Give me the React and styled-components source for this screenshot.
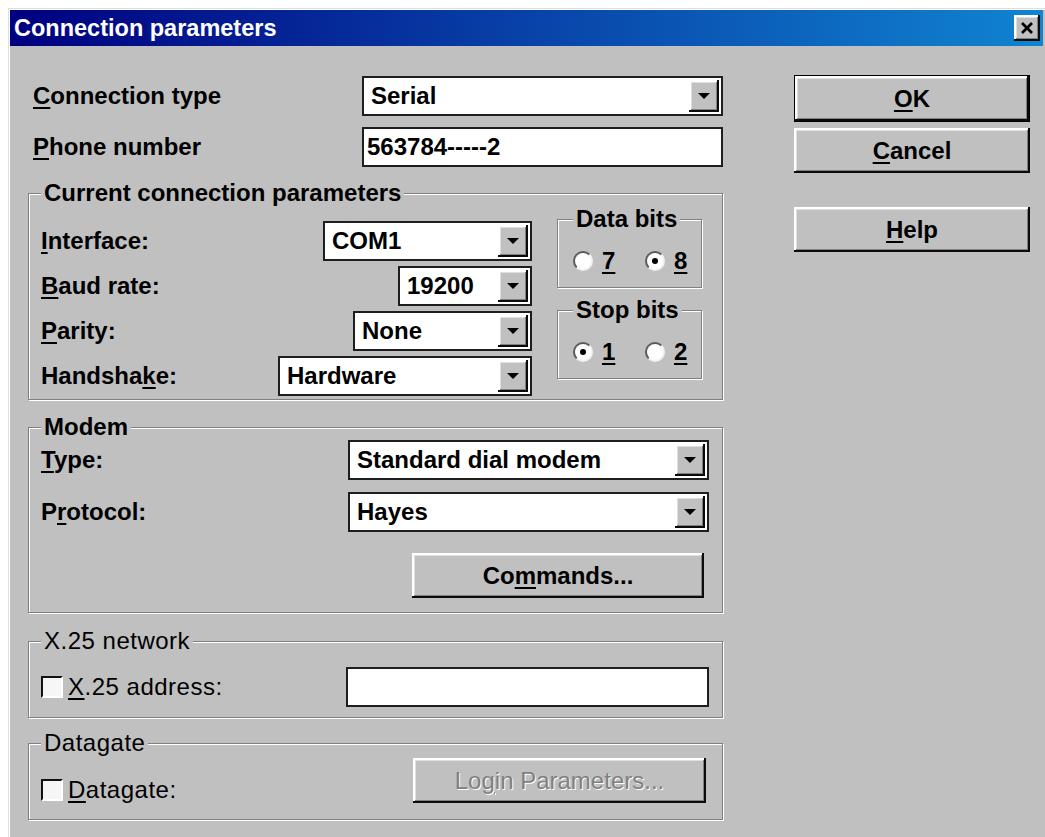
import React from "react";
import styled, { createGlobalStyle } from "styled-components";

const GlobalStyle = createGlobalStyle`
  body {
    margin: 0;
    background: #fff;
    font-family: "Liberation Sans", Arial, sans-serif;
    color: #000;
  }
`;

const raised = `
  box-shadow: inset -2px -2px 0 #0a0a0a, inset 2px 2px 0 #fff,
    inset -3px -3px 0 #808080, inset 3px 3px 0 #dfdfdf;
`;

const Dialog = styled.div`
  margin: 8px 0 0 8px;
  width: 1037px;
  height: 829px;
  box-sizing: border-box;
  padding: 2px 2px 0;
  background: #c0c0c0;
  box-shadow: inset 1px 1px 0 #dfdfdf, inset 2px 2px 0 #fff;
  overflow: hidden;
`;

const TitleBar = styled.div`
  height: 36px;
  display: flex;
  align-items: center;
  justify-content: space-between;
  padding: 0 3px 0 4px;
  background: linear-gradient(to right, #000080, #1084d0);
`;

const Title = styled.span`
  color: #fff;
  font-weight: 700;
  font-size: 23.5px;
`;

const CloseButton = styled.div`
  width: 26px;
  height: 26px;
  display: flex;
  align-items: center;
  justify-content: center;
  background: #c0c0c0;
  ${raised}
`;

const Body = styled.div`
  display: flex;
  padding: 30px 0 0 18px;
`;

const LeftCol = styled.div`
  width: 695px;
  display: flex;
  flex-direction: column;
`;

const RightCol = styled.div`
  width: 236px;
  margin: -1px 0 0 71px;
  display: flex;
  flex-direction: column;
`;

const TopRow = styled.div`
  height: 40px;
  display: flex;
  align-items: center;
  justify-content: space-between;
  padding-left: 5px;
  margin-top: ${(p) => p.$mt || 0}px;
`;

const Label = styled.span`
  font-size: 24px;
  line-height: 26px;
  font-weight: ${(p) => (p.$light ? 400 : 700)};
  letter-spacing: ${(p) => (p.$light ? "0.5px" : "0")};
  white-space: nowrap;
`;

const Key = styled.u`
  text-decoration-thickness: 2px;
  text-underline-offset: 3px;
`;

const ComboBox = styled.div`
  width: ${(p) => p.$w}px;
  height: 40px;
  box-sizing: border-box;
  display: flex;
  align-items: stretch;
  padding: 2px;
  background: #fff;
  border: 2px solid #1e1e1e;
`;

const ComboText = styled.span`
  flex: 1;
  display: flex;
  align-items: center;
  padding-left: 5px;
  font-size: 24px;
  font-weight: 700;
`;

const DropButton = styled.span`
  width: 30px;
  display: flex;
  align-items: center;
  justify-content: center;
  background: #c0c0c0;
  ${raised}

  &::after {
    content: "";
    border-left: 6px solid transparent;
    border-right: 6px solid transparent;
    border-top: 6px solid #000;
  }
`;

const TextBox = styled.div`
  width: ${(p) => p.$w}px;
  height: 40px;
  box-sizing: border-box;
  display: flex;
  align-items: center;
  padding-left: 3px;
  background: #fff;
  border: 2px solid #1e1e1e;
  font-size: 24px;
  font-weight: 700;
`;

const Group = styled.fieldset`
  margin: ${(p) => p.$mt}px 0 0;
  padding: ${(p) => p.$pt}px ${(p) => p.$pr}px ${(p) => p.$pb}px 12px;
  min-width: 0;
  border: 1px solid #808080;
  box-shadow: inset 1px 1px 0 #fff, 1px 1px 0 #fff;
`;

const SmallGroup = styled(Group)`
  margin: 0;
  padding: 15px 0 14px 15px;
`;

const Legend = styled.legend`
  padding: 0 3px;
  background: #c0c0c0;
  font-size: 24px;
  line-height: 26px;
  font-weight: ${(p) => (p.$light ? 400 : 700)};
  letter-spacing: ${(p) => (p.$light ? "0.5px" : "0")};
  white-space: nowrap;
`;

const ParamGrid = styled.div`
  display: grid;
  grid-template-columns: 491px 145px;
  column-gap: 25px;
`;

const FieldStack = styled.div`
  display: flex;
  flex-direction: column;
  gap: 5px;
  padding-top: 15px;
`;

const FieldRow = styled.div`
  height: 40px;
  display: flex;
  align-items: ${(p) => p.$align || "center"};
  justify-content: space-between;
  margin-top: ${(p) => p.$mt || 0}px;
`;

const BitsStack = styled.div`
  display: flex;
  flex-direction: column;
  gap: 9px;
`;

const RadioRow = styled.div`
  display: grid;
  grid-template-columns: 72px auto;
  height: 26px;
`;

const RadioOption = styled.label`
  display: flex;
  align-items: center;
  gap: 9px;
  font-size: 24px;
  font-weight: 700;
`;

const RadioDot = styled.span`
  width: 20px;
  height: 20px;
  box-sizing: border-box;
  border-radius: 50%;
  border: 2px solid;
  border-color: #5a5a5a #f2f2f2 #f2f2f2 #5a5a5a;
  background: #fff;
  display: flex;
  align-items: center;
  justify-content: center;

  &::after {
    content: "";
    width: 6px;
    height: 6px;
    border-radius: 50%;
    background: ${(p) => (p.$on ? "#000" : "transparent")};
  }
`;

const ModemStack = styled.div`
  display: flex;
  flex-direction: column;
`;

const CheckLabel = styled.label`
  display: flex;
  align-items: center;
  gap: 5px;
`;

const CheckBox = styled.span`
  width: 22px;
  height: 22px;
  box-sizing: border-box;
  background: #f6f6f6;
  border-style: solid;
  border-width: 2px;
  border-color: #111 #fff #fff #111;
`;

const Button = styled.div`
  width: ${(p) => p.$w}px;
  height: ${(p) => (p.$default ? 47 : 45)}px;
  box-sizing: border-box;
  margin: ${(p) => p.$mt || 0}px ${(p) => p.$mr || 0}px 0 0;
  align-self: ${(p) => (p.$end ? "flex-end" : "auto")};
  display: flex;
  align-items: center;
  justify-content: center;
  background: #c0c0c0;
  border: ${(p) => (p.$default ? "1px solid #000" : "none")};
  font-size: 24px;
  font-weight: ${(p) => (p.$disabled ? 400 : 700)};
  color: ${(p) => (p.$disabled ? "#808080" : "#000")};
  text-shadow: ${(p) => (p.$disabled ? "1px 1px 0 #fff" : "none")};
  ${raised}
`;

const Combo = ({ w, children }) => (
  <ComboBox $w={w}>
    <ComboText>{children}</ComboText>
    <DropButton />
  </ComboBox>
);

const Radio = ({ on, children }) => (
  <RadioOption>
    <RadioDot $on={on} />
    <Key>{children}</Key>
  </RadioOption>
);

export default function App() {
  return (
    <>
      <GlobalStyle />
      <Dialog>
        <TitleBar>
          <Title>Connection parameters</Title>
          <CloseButton>
            <svg width="14" height="12" viewBox="0 0 14 12">
              <path d="M2 1 L12 11 M12 1 L2 11" stroke="#000" strokeWidth="2.8" />
            </svg>
          </CloseButton>
        </TitleBar>

        <Body>
          <LeftCol>
            <TopRow>
              <Label>
                <Key>C</Key>onnection type
              </Label>
              <Combo w={361}>Serial</Combo>
            </TopRow>
            <TopRow $mt={11}>
              <Label>
                <Key>P</Key>hone number
              </Label>
              <TextBox $w={361}>563784-----2</TextBox>
            </TopRow>

            <Group $mt={13} $pt={0} $pr={20} $pb={3}>
              <Legend>Current connection parameters</Legend>
              <ParamGrid>
                <FieldStack>
                  <FieldRow>
                    <Label>
                      <Key>I</Key>nterface:
                    </Label>
                    <Combo w={209}>COM1</Combo>
                  </FieldRow>
                  <FieldRow>
                    <Label>
                      <Key>B</Key>aud rate:
                    </Label>
                    <Combo w={134}>19200</Combo>
                  </FieldRow>
                  <FieldRow>
                    <Label>
                      <Key>P</Key>arity:
                    </Label>
                    <Combo w={179}>None</Combo>
                  </FieldRow>
                  <FieldRow>
                    <Label>
                      Handsha<Key>k</Key>e:
                    </Label>
                    <Combo w={254}>Hardware</Combo>
                  </FieldRow>
                </FieldStack>

                <BitsStack>
                  <SmallGroup>
                    <Legend>Data bits</Legend>
                    <RadioRow>
                      <Radio>7</Radio>
                      <Radio on>8</Radio>
                    </RadioRow>
                  </SmallGroup>
                  <SmallGroup>
                    <Legend>Stop bits</Legend>
                    <RadioRow>
                      <Radio on>1</Radio>
                      <Radio>2</Radio>
                    </RadioRow>
                  </SmallGroup>
                </BitsStack>
              </ParamGrid>
            </Group>

            <Group $mt={14} $pt={0} $pr={13} $pb={14}>
              <Legend>Modem</Legend>
              <ModemStack>
                <FieldRow>
                  <Label>
                    <Key>T</Key>ype:
                  </Label>
                  <Combo w={361}>Standard dial modem</Combo>
                </FieldRow>
                <FieldRow $mt={12}>
                  <Label>
                    P<Key>r</Key>otocol:
                  </Label>
                  <Combo w={361}>Hayes</Combo>
                </FieldRow>
                <Button $w={292} $mt={21} $mr={5} $end>
                  <span>
                    Co<Key>m</Key>mands...
                  </span>
                </Button>
              </ModemStack>
            </Group>

            <Group $mt={15} $pt={13} $pr={13} $pb={10}>
              <Legend $light>X.25 network</Legend>
              <FieldRow>
                <CheckLabel>
                  <CheckBox />
                  <Label $light>
                    <Key>X</Key>.25 address:
                  </Label>
                </CheckLabel>
                <TextBox $w={363} />
              </FieldRow>
            </Group>

            <Group $mt={12} $pt={2} $pr={13} $pb={16}>
              <Legend $light>Datagate</Legend>
              <FieldRow $align="flex-end" style={{ height: 45 }}>
                <CheckLabel>
                  <CheckBox />
                  <Label $light>
                    <Key>D</Key>atagate:
                  </Label>
                </CheckLabel>
                <Button $w={293} $mr={3} $disabled>
                  <span>
                    Lo<Key>g</Key>in Parameters...
                  </span>
                </Button>
              </FieldRow>
            </Group>
          </LeftCol>

          <RightCol>
            <Button $w={236} $default>
              <span>
                <Key>O</Key>K
              </span>
            </Button>
            <Button $w={236} $mt={6}>
              <span>
                <Key>C</Key>ancel
              </span>
            </Button>
            <Button $w={236} $mt={34}>
              <span>
                <Key>H</Key>elp
              </span>
            </Button>
          </RightCol>
        </Body>
      </Dialog>
    </>
  );
}
